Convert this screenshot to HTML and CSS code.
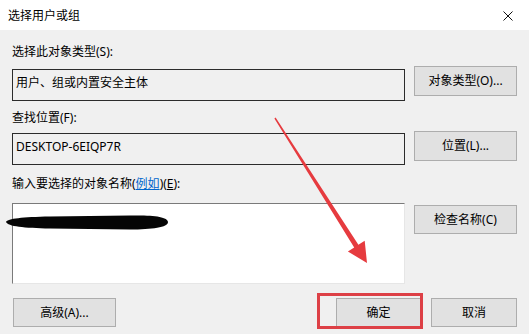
FILE: index.html
```html
<!DOCTYPE html>
<html lang="zh-CN">
<head>
<meta charset="utf-8">
<title>选择用户或组</title>
<link rel="stylesheet" href="styles.css">
</head>
<body>
<div class="dialog">
  <div class="titlebar">
    <span class="title">选择用户或组</span>
    <svg class="close" width="10" height="10" viewBox="0 0 10 10"><path d="M0.5 0.5L9.5 9.5M9.5 0.5L0.5 9.5" stroke="#111" stroke-width="1" fill="none"/></svg>
  </div>
  <div class="panel">
    <div class="label l1">选择此对象类型(S):</div>
    <div class="field f1">用户、组或内置安全主体</div>
    <button class="btn b1">对象类型(O)...</button>

    <div class="label l2">查找位置(F):</div>
    <div class="field f2">DESKTOP-6EIQP7R</div>
    <button class="btn b2">位置(L)...</button>

    <div class="label l3">输入要选择的对象名称(<a class="link">例如</a>)(<u>E</u>):</div>
    <div class="names"></div>
    <button class="btn b3">检查名称(C)</button>

    <div class="footer">
      <button class="btn adv">高级(A)...</button>
      <div class="actions">
        <button class="btn ok">确定</button>
        <button class="btn cancel">取消</button>
      </div>
    </div>
  </div>

  <svg class="annot" width="529" height="334" viewBox="0 0 529 334">
    <path class="blob" d="M6,222 C8,218.5 22,217 50,216.5 L130,215.5 C152,215 168,216.5 168,222 C168,227.5 152,229.5 130,229.5 L50,228.5 C24,228 8,226.5 6,222 Z"/>
    <polygon class="arrow" points="275.6,117.6 358.4,244.8 364.7,240.7 367,263 347.9,251.5 354.2,247.4 274.4,118.4"/>
    <rect class="box" x="318.5" y="294.5" width="103" height="33"/>
  </svg>
</div>
</body>
</html>
```

FILE: styles.css
```css
* { box-sizing: border-box; }
html, body {
  margin: 0;
  padding: 0;
}
body {
  width: 529px;
  height: 334px;
  overflow: hidden;
  font-family: "Noto Sans", "Noto Sans CJK SC", sans-serif;
  font-size: 12px;
  color: #000;
  background: #f0f0f0;
}
.dialog {
  position: relative;
  width: 529px;
  height: 334px;
}
.titlebar {
  height: 30px;
  background: #fff;
  display: flex;
  align-items: center;
  justify-content: space-between;
  padding: 1px 16px 0 8px;
}
.title {
  font-size: 12px;
  line-height: 16px;
}
.close { display: block; }

.panel {
  height: 304px;
  background: #f0f0f0;
  padding: 14px 12px 0 12px;
  display: grid;
  grid-template-columns: 393px 103px;
  column-gap: 9px;
  align-items: start;
  align-content: start;
}
.label {
  grid-column: 1;
  line-height: 16px;
  height: 16px;
  white-space: nowrap;
}
.l2 { margin-top: 9px; }
.l3 { margin-top: 11px; }
.link {
  color: #0066cc;
  text-decoration: underline;
}
.field {
  grid-column: 1;
  height: 32px;
  border: 1px solid #2b2b2b;
  padding: 5px 0 0 3px;
  line-height: 16px;
  background: #f0f0f0;
  white-space: nowrap;
}
.f1 { margin-top: 9px; }
.f2 { margin-top: 7px; }
.names {
  grid-column: 1;
  margin-top: 11px;
  height: 81px;
  background: #fff;
  border-style: solid;
  border-width: 1px;
  border-color: #7a7a7a #e6e6e6 #e6e6e6 #7a7a7a;
}
.btn {
  font-family: inherit;
  font-size: 12px;
  color: #000;
  height: 30px;
  background: #e1e1e1;
  border: 1px solid #adadad;
  padding: 0;
  margin: 0;
  line-height: 16px;
}
.b1, .b2, .b3 {
  grid-column: 2;
  width: 103px;
}
.b1, .b2 { align-self: center; }
.b3 { margin-top: 13px; height: 29px; }

.footer {
  grid-column: 1 / span 2;
  margin-top: 14px;
  display: flex;
  justify-content: space-between;
  align-items: center;
}
.adv { width: 103px; margin-left: 1px; height: 29px; }
.actions {
  display: flex;
  gap: 10px;
}
.ok { width: 85px; height: 29px; }
.cancel { width: 86px; height: 29px; }

.annot {
  position: absolute;
  left: 0;
  top: 0;
  pointer-events: none;
}
.blob { fill: #050505; }
.arrow { fill: #e63b3f; }
.box {
  fill: none;
  stroke: #dd4046;
  stroke-width: 3;
}
```
